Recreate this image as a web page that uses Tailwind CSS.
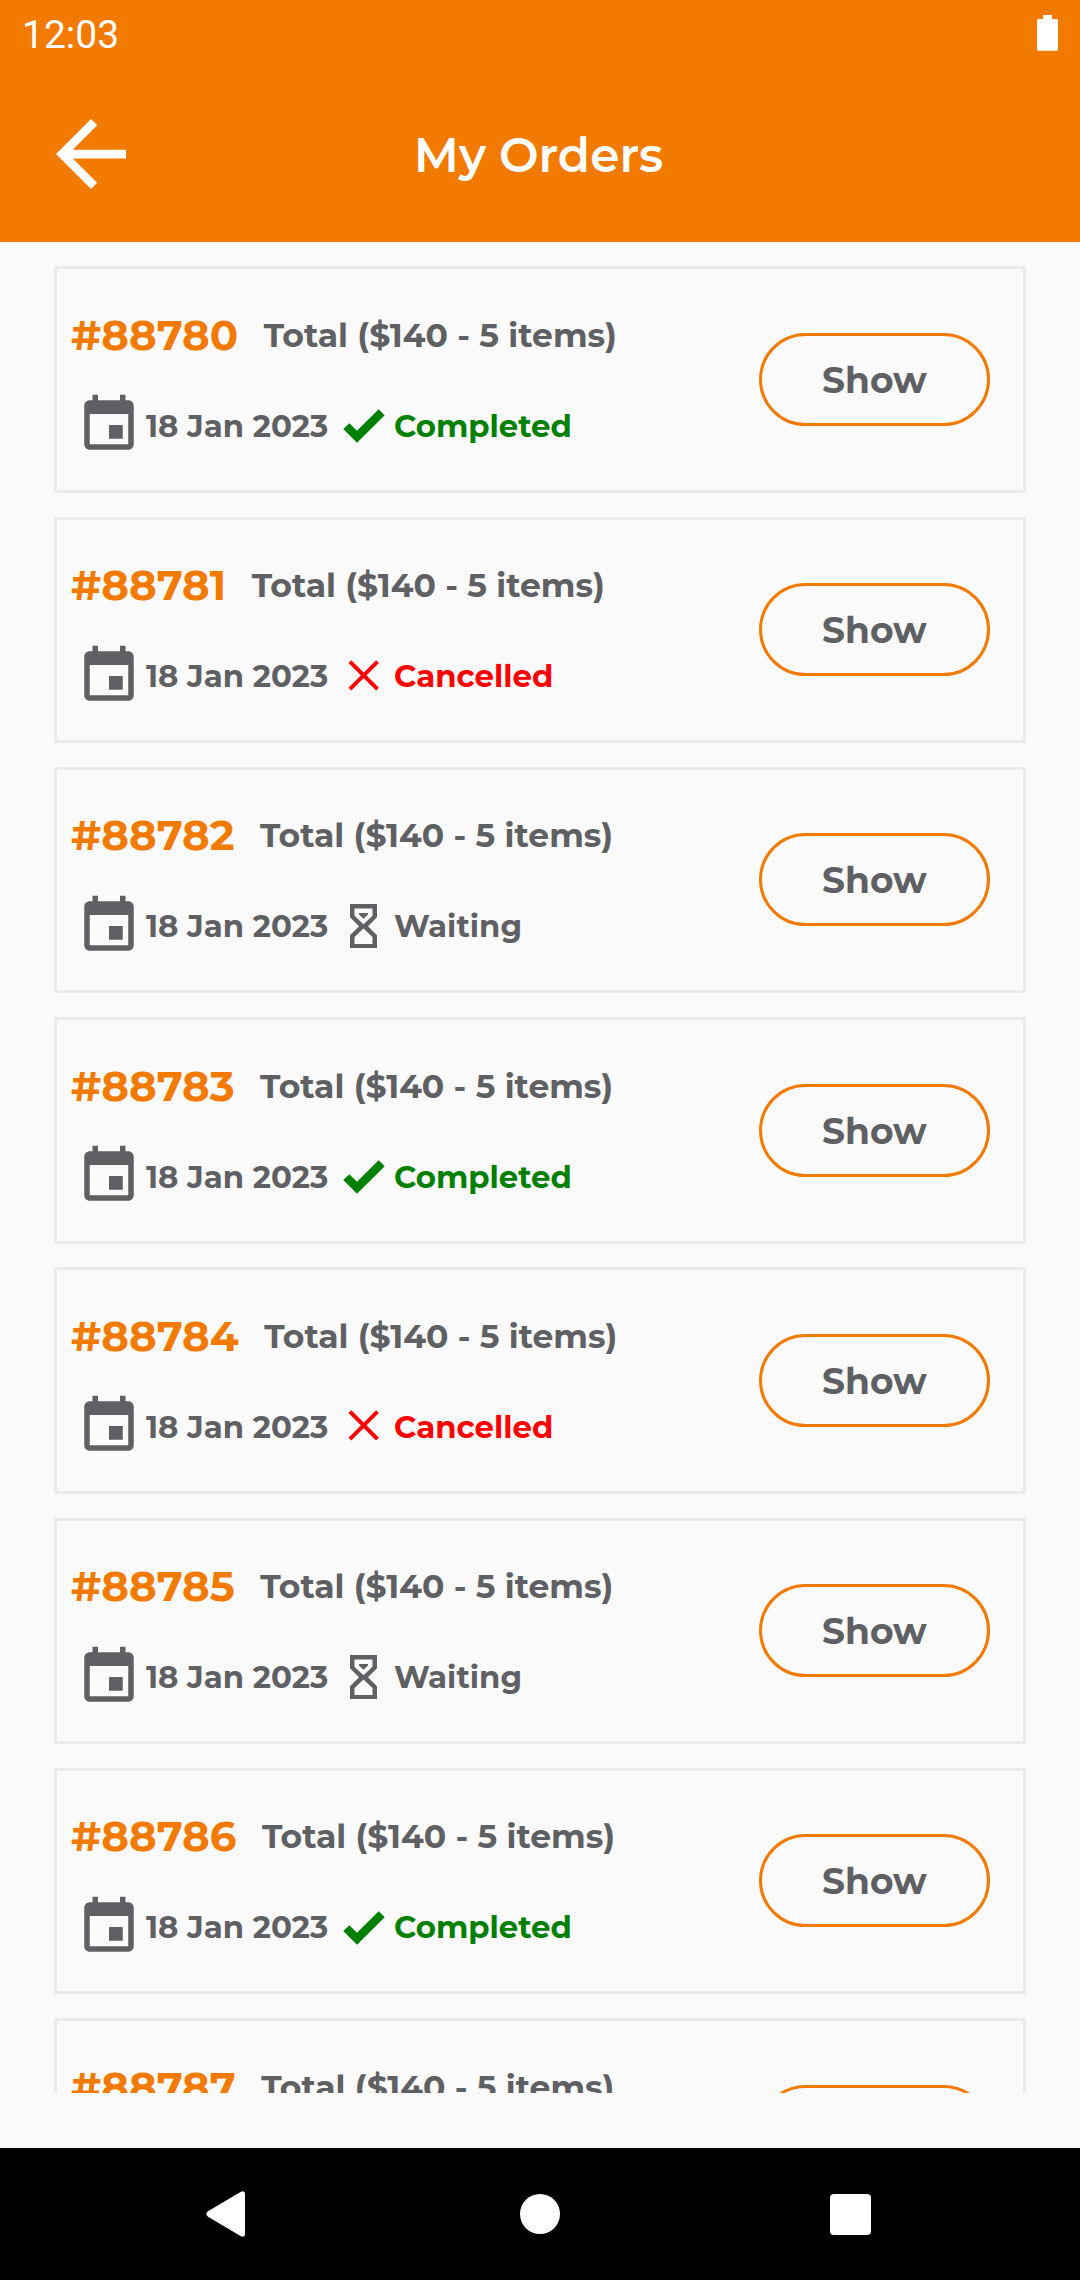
<!DOCTYPE html>
<html lang="en">
<head>
<meta charset="utf-8">
<title>My Orders</title>
<script src="https://cdn.jsdelivr.net/npm/@tailwindcss/browser@4"></script>
</head>
<body class="bg-[#fafafa]">
<div class="flex h-[2280px] w-[1080px] flex-col overflow-hidden bg-[#fafafa] font-[Montserrat,Inter,sans-serif] text-[#5f6063]">
  <header class="flex h-[242px] shrink-0 flex-col bg-[#f27a00] text-white">
    <div class="flex h-[66px] items-center justify-between pl-[22px] pr-[22px]">
      <div class="pt-[3px] font-[Roboto,sans-serif] text-[39px] leading-[70px]">12:03</div>
      <svg class="h-9 w-[21px]" viewBox="0 0 21 36" fill="#fff"><path d="M6 0h9v4h4.500q1.500 0 1.500 1.500v28.500q0 1.700-1.500 1.700h-18q-1.500 0-1.500-1.700v-28.500q0-1.500 1.500-1.500h4.500z"/></svg>
    </div>
    <div class="flex h-[178px] items-center pl-[56px]">
      <svg class="h-[70px] w-[70px]" viewBox="4 4 16 16" fill="#fff"><path d="M20 11H7.830l5.590-5.590L12 4l-8 8 8 8 1.410-1.410L7.830 13H20v-2z"/></svg>
      <h1 class="ml-[288px] pt-[3px] text-[47px] font-semibold leading-[60px]">My Orders</h1>
    </div>
  </header>
  <main id="orders" class="flex h-[1851px] shrink-0 flex-col gap-[23.750px] overflow-hidden px-[54px] pt-[24.400px]"></main>
  <div class="h-[55px] shrink-0"></div>
  <nav class="flex h-[132px] shrink-0 items-center bg-black pl-[206px] text-white">
    <svg class="h-[46px] w-[39px]" viewBox="0 0 39 46" fill="#fff"><path d="M2 20.300L34.500 1q4.500-2 4.500 2v40q0 4-4.500 2L2 25.700q-3.500-2.700 0-5.400z"/></svg>
    <div class="ml-[275px] size-10 rounded-full bg-white"></div>
    <div class="ml-[270px] size-[41px] rounded-[4px] bg-white"></div>
  </nav>
</div>
<script>
const statuses = [
  { label: 'Completed', cls: 'text-[#008000]',
    icon: '<path d="M8.300 29L14.300 23.200L22 30.800L43.700 9.300L49.700 15.300L22 42.700Z"/>' },
  { label: 'Cancelled', cls: 'text-[#ff0000]',
    icon: '<path d="M14.900 10.600L42.500 38.200M42.500 10.600L14.900 38.200" fill="none" stroke="currentColor" stroke-width="4"/>' },
  { label: 'Waiting', cls: 'text-[#5f6063]',
    icon: '<path fill-rule="evenodd" d="M15 3h27v13.200l-9 9l9 9v12.800h-27v-12.800l9-9l-9-9zM19.500 7.500v7.200l9 8.600l9-8.600v-7.200zM19.500 43h18v-7l-9-8.600l-9 8.600z"/><path d="M24 12h9v1.500l-4.500 4.200l-4.500-4.200z"/>' }
];
document.getElementById('orders').innerHTML = Array.from({ length: 8 }, (_, i) => {
  const s = statuses[i % 3];
  return `
  <article class="flex h-[226.500px] shrink-0 items-start justify-between border-3 border-[#ebebeb] pl-[14px] pr-[33px]">
    <div class="flex flex-col">
      <div class="flex h-[66px] items-center gap-[25.500px] pt-[65px]">
        <div class="text-[42px] font-bold leading-[60px] text-[#f27a00]">#8878${i}</div>
        <div class="whitespace-nowrap text-[33px] font-bold leading-[60px]">Total ($140 - 5 items)</div>
      </div>
      <div class="mt-[51px] flex h-[78px] items-center pl-[5px]">
        <svg class="h-[66px] w-[66px]" viewBox="0 0 24 24" fill="currentColor"><path d="M17 12h-5v5h5v-5zM16 1v2H8V1H6v2H5c-1.110 0-1.990.9-1.990 2L3 19c0 1.100.89 2 2 2h14c1.100 0 2-.9 2-2V5c0-1.100-.9-2-2-2h-1V1h-2zm3 18H5V8h14v11z"/></svg>
        <div class="ml-[4px] w-[189px] whitespace-nowrap pt-[1px] text-[30.800px] font-bold leading-[40px]">18 Jan 2023</div>
        <div class="flex items-center ${s.cls}">
          <svg class="h-[50px] w-[59px]" viewBox="0 0 59 50" fill="currentColor">${s.icon}</svg>
          <div class="pt-[1px] text-[30.800px] font-bold leading-[40px]">${s.label}</div>
        </div>
      </div>
    </div>
    <button class="mt-[63.500px] flex h-[93px] w-[231px] items-center rounded-full border-3 border-[#f27a00] pl-[60px] pt-[1px] text-[36px] font-bold">Show</button>
  </article>`;
}).join('');
</script>
</body>
</html>
